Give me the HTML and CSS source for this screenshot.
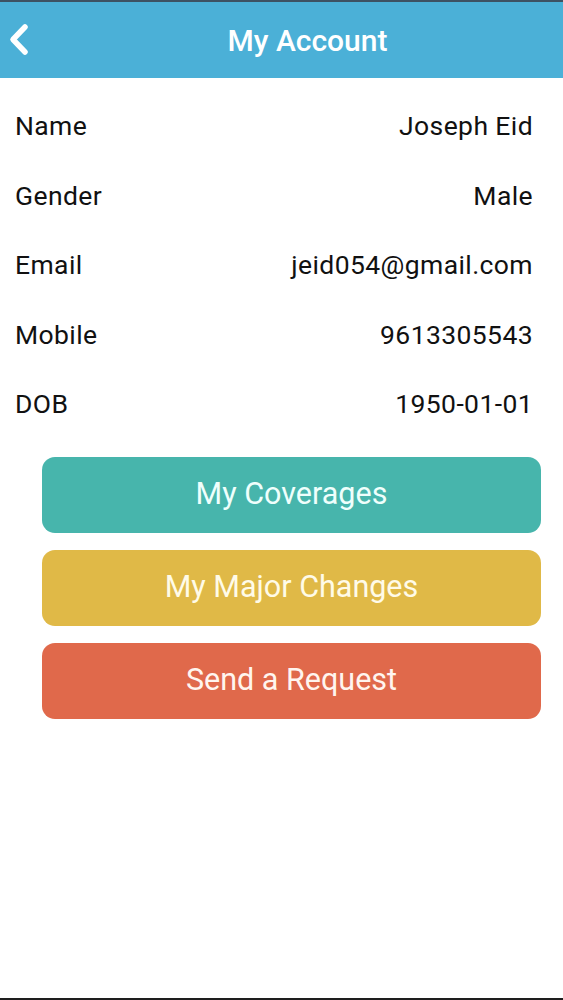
FILE: index.html
```html
<!DOCTYPE html>
<html>
<head>
<meta charset="utf-8">
<link rel="stylesheet" href="styles.css">
</head>
<body>
<div class="screen">
  <header class="topbar">
    <button class="back" aria-label="Back">
      <svg width="24" height="36" viewBox="0 0 24 36"><path d="M17 5 L5 17.5 L17 30" fill="none" stroke="#fff" stroke-width="5.5" stroke-linecap="round" stroke-linejoin="round"/></svg>
    </button>
    <h1 class="title">My Account</h1>
  </header>
  <main class="content">
    <dl class="info">
      <div class="row"><dt>Name</dt><dd>Joseph Eid</dd></div>
      <div class="row"><dt>Gender</dt><dd>Male</dd></div>
      <div class="row"><dt>Email</dt><dd>jeid054@gmail.com</dd></div>
      <div class="row"><dt>Mobile</dt><dd>9613305543</dd></div>
      <div class="row"><dt>DOB</dt><dd>1950-01-01</dd></div>
    </dl>
    <div class="actions">
      <button class="btn btn-teal">My Coverages</button>
      <button class="btn btn-yellow">My Major Changes</button>
      <button class="btn btn-orange">Send a Request</button>
    </div>
  </main>
</div>
</body>
</html>
```

FILE: styles.css
```css
* { box-sizing: border-box; }
html, body { margin: 0; padding: 0; background: #fff; }
body { font-family: Roboto, "Noto Sans", "Liberation Sans", sans-serif; }

.screen {
  height: 1000px;
  display: flex;
  flex-direction: column;
  border-top: 2px solid #3d5263;
  border-bottom: 2px solid #1e1e1e;
  background: #fff;
}

.topbar {
  height: 76px;
  background: #4bb0d7;
  display: flex;
  align-items: center;
  flex: none;
}
.back {
  background: none;
  border: 0;
  padding: 0;
  margin-left: 8px;
  width: 24px;
  height: 36px;
  display: flex;
}
.title {
  margin: 0 0 0 -32px;
  flex: 1;
  text-align: center;
  color: #fff;
  font-size: 30px;
  font-weight: 500;
  padding-left: 52px;
  margin-top: 0;
}

.content { flex: 1; }

.info {
  margin: 0;
  padding: 13px 30px 0 15px;
}
.row {
  height: 69.5px;
  display: flex;
  align-items: center;
  justify-content: space-between;
  font-size: 26.5px;
  letter-spacing: 0.4px;
  color: #111;
}
.row dt, .row dd { margin: 0; }

.actions {
  display: flex;
  flex-direction: column;
  gap: 17px;
  padding: 18px 22px 0 42px;
}
.btn {
  height: 76px;
  border: 0;
  border-radius: 13px;
  font-family: Roboto, "Noto Sans", "Liberation Sans", sans-serif;
  font-size: 30.5px;
  font-weight: 400;
  padding: 0 0 3px;
}
.btn-teal { background: #47b5ac; color: #effffc; }
.btn-yellow { background: #e0b947; color: #fffbe8; }
.btn-orange { background: #e0694b; color: #fff5ef; }
```
